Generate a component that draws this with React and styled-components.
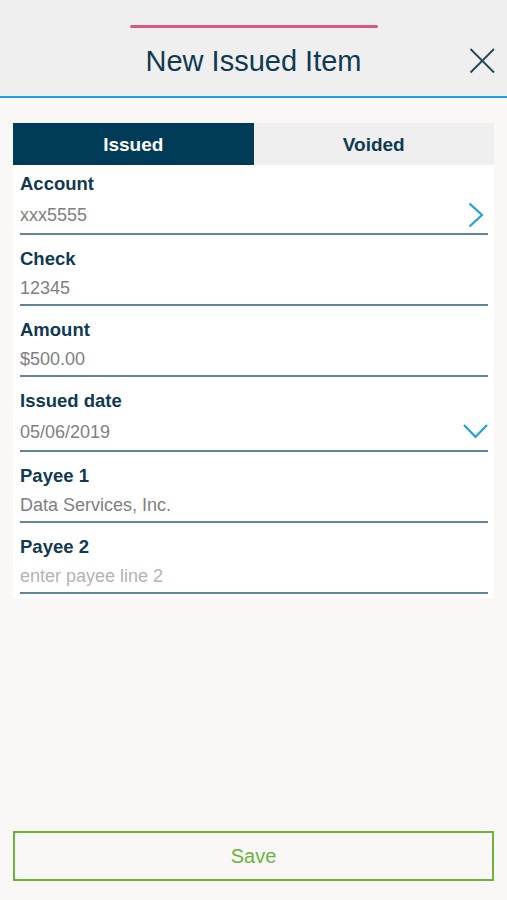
import styled, { createGlobalStyle } from 'styled-components';

const GlobalStyle = createGlobalStyle`
  * { box-sizing: border-box; }
  html, body {
    margin: 0;
    padding: 0;
    background: #f9f8f6;
    font-family: "Liberation Sans", Arial, sans-serif;
  }
`;

const Screen = styled.div`
  display: flex;
  flex-direction: column;
  min-height: 900px;
  background: #f9f8f6;
`;

const Header = styled.header`
  position: relative;
  height: 98px;
  background: #efefef;
  border-bottom: 2px solid #1fa2dc;
  display: flex;
  flex-direction: column;
  align-items: center;
`;

const Grabber = styled.div`
  width: 248px;
  height: 3px;
  border-radius: 2px;
  background: #d65a80;
  margin-top: 25px;
`;

const Title = styled.h1`
  margin: 15px 0 0;
  font-size: 29px;
  font-weight: 400;
  line-height: 36px;
  color: #0f3a52;
`;

const CloseButton = styled.button`
  position: absolute;
  right: 12px;
  top: 48px;
  width: 26px;
  height: 26px;
  padding: 0;
  border: none;
  background: none;
  display: flex;
`;

const Content = styled.main`
  padding: 25px 13px 0;
`;

const Tabs = styled.div`
  display: flex;
  height: 42px;
  background: #efefef;
`;

const Tab = styled.button`
  flex: 1;
  border: none;
  padding: 2px 0 0;
  font-family: inherit;
  font-size: 19px;
  font-weight: 700;
  color: ${(p) => (p.$active ? '#ffffff' : '#0f3a52')};
  background: ${(p) => (p.$active ? '#003b57' : 'transparent')};
`;

const Card = styled.section`
  background: #ffffff;
  padding: 0 6px 4px 7px;
`;

const Field = styled.div`
  padding: 13px 0 5px;
  border-bottom: 2px solid #5f8799;
  display: flex;
  flex-direction: column;
  gap: 7px;

  &:first-child {
    padding-top: 8px;
  }
`;

const Label = styled.div`
  font-size: 18.5px;
  font-weight: 700;
  line-height: 22px;
  color: #0f3a52;
`;

const ValueRow = styled.div`
  display: flex;
  align-items: center;
  justify-content: space-between;
  min-height: ${(p) => (p.$withIcon ? '26px' : '22px')};
`;

const Value = styled.span`
  font-size: 18px;
  line-height: 22px;
  color: ${(p) => (p.$placeholder ? '#b3b3b3' : '#808080')};
`;

const Footer = styled.div`
  margin-top: auto;
  padding: 0 13px 19px;
`;

const SaveButton = styled.button`
  width: 100%;
  height: 50px;
  border: 2px solid #6ab43e;
  background: transparent;
  font-family: inherit;
  font-size: 20px;
  color: #6ab43e;
`;

const ChevronRight = () => (
  <svg width="26" height="26" viewBox="0 0 26 26" fill="none">
    <path d="M7.5 1.5 L20 13 L7.5 24.5" stroke="#1fa2dc" strokeWidth="2.2" />
  </svg>
);

const ChevronDown = () => (
  <svg width="26" height="26" viewBox="0 0 26 26" fill="none">
    <path d="M2 6 L13.5 18 L25 6" stroke="#1fa2dc" strokeWidth="2.2" />
  </svg>
);

const fields = [
  { label: 'Account', value: 'xxx5555', icon: 'right' },
  { label: 'Check', value: '12345' },
  { label: 'Amount', value: '$500.00' },
  { label: 'Issued date', value: '05/06/2019', icon: 'down' },
  { label: 'Payee 1', value: 'Data Services, Inc.' },
  { label: 'Payee 2', value: 'enter payee line 2', placeholder: true },
];

export default function App() {
  return (
    <Screen>
      <GlobalStyle />
      <Header>
        <Grabber />
        <Title>New Issued Item</Title>
        <CloseButton aria-label="Close">
          <svg width="26" height="26" viewBox="0 0 26 26">
            <path d="M1.5 1 L25 24.5 M25 1 L1.5 24.5" stroke="#2a4a5c" strokeWidth="2" />
          </svg>
        </CloseButton>
      </Header>
      <Content>
        <Tabs>
          <Tab $active>Issued</Tab>
          <Tab>Voided</Tab>
        </Tabs>
        <Card>
          {fields.map((f) => (
            <Field key={f.label}>
              <Label>{f.label}</Label>
              <ValueRow $withIcon={!!f.icon}>
                <Value $placeholder={f.placeholder}>{f.value}</Value>
                {f.icon === 'right' && <ChevronRight />}
                {f.icon === 'down' && <ChevronDown />}
              </ValueRow>
            </Field>
          ))}
        </Card>
      </Content>
      <Footer>
        <SaveButton>Save</SaveButton>
      </Footer>
    </Screen>
  );
}
